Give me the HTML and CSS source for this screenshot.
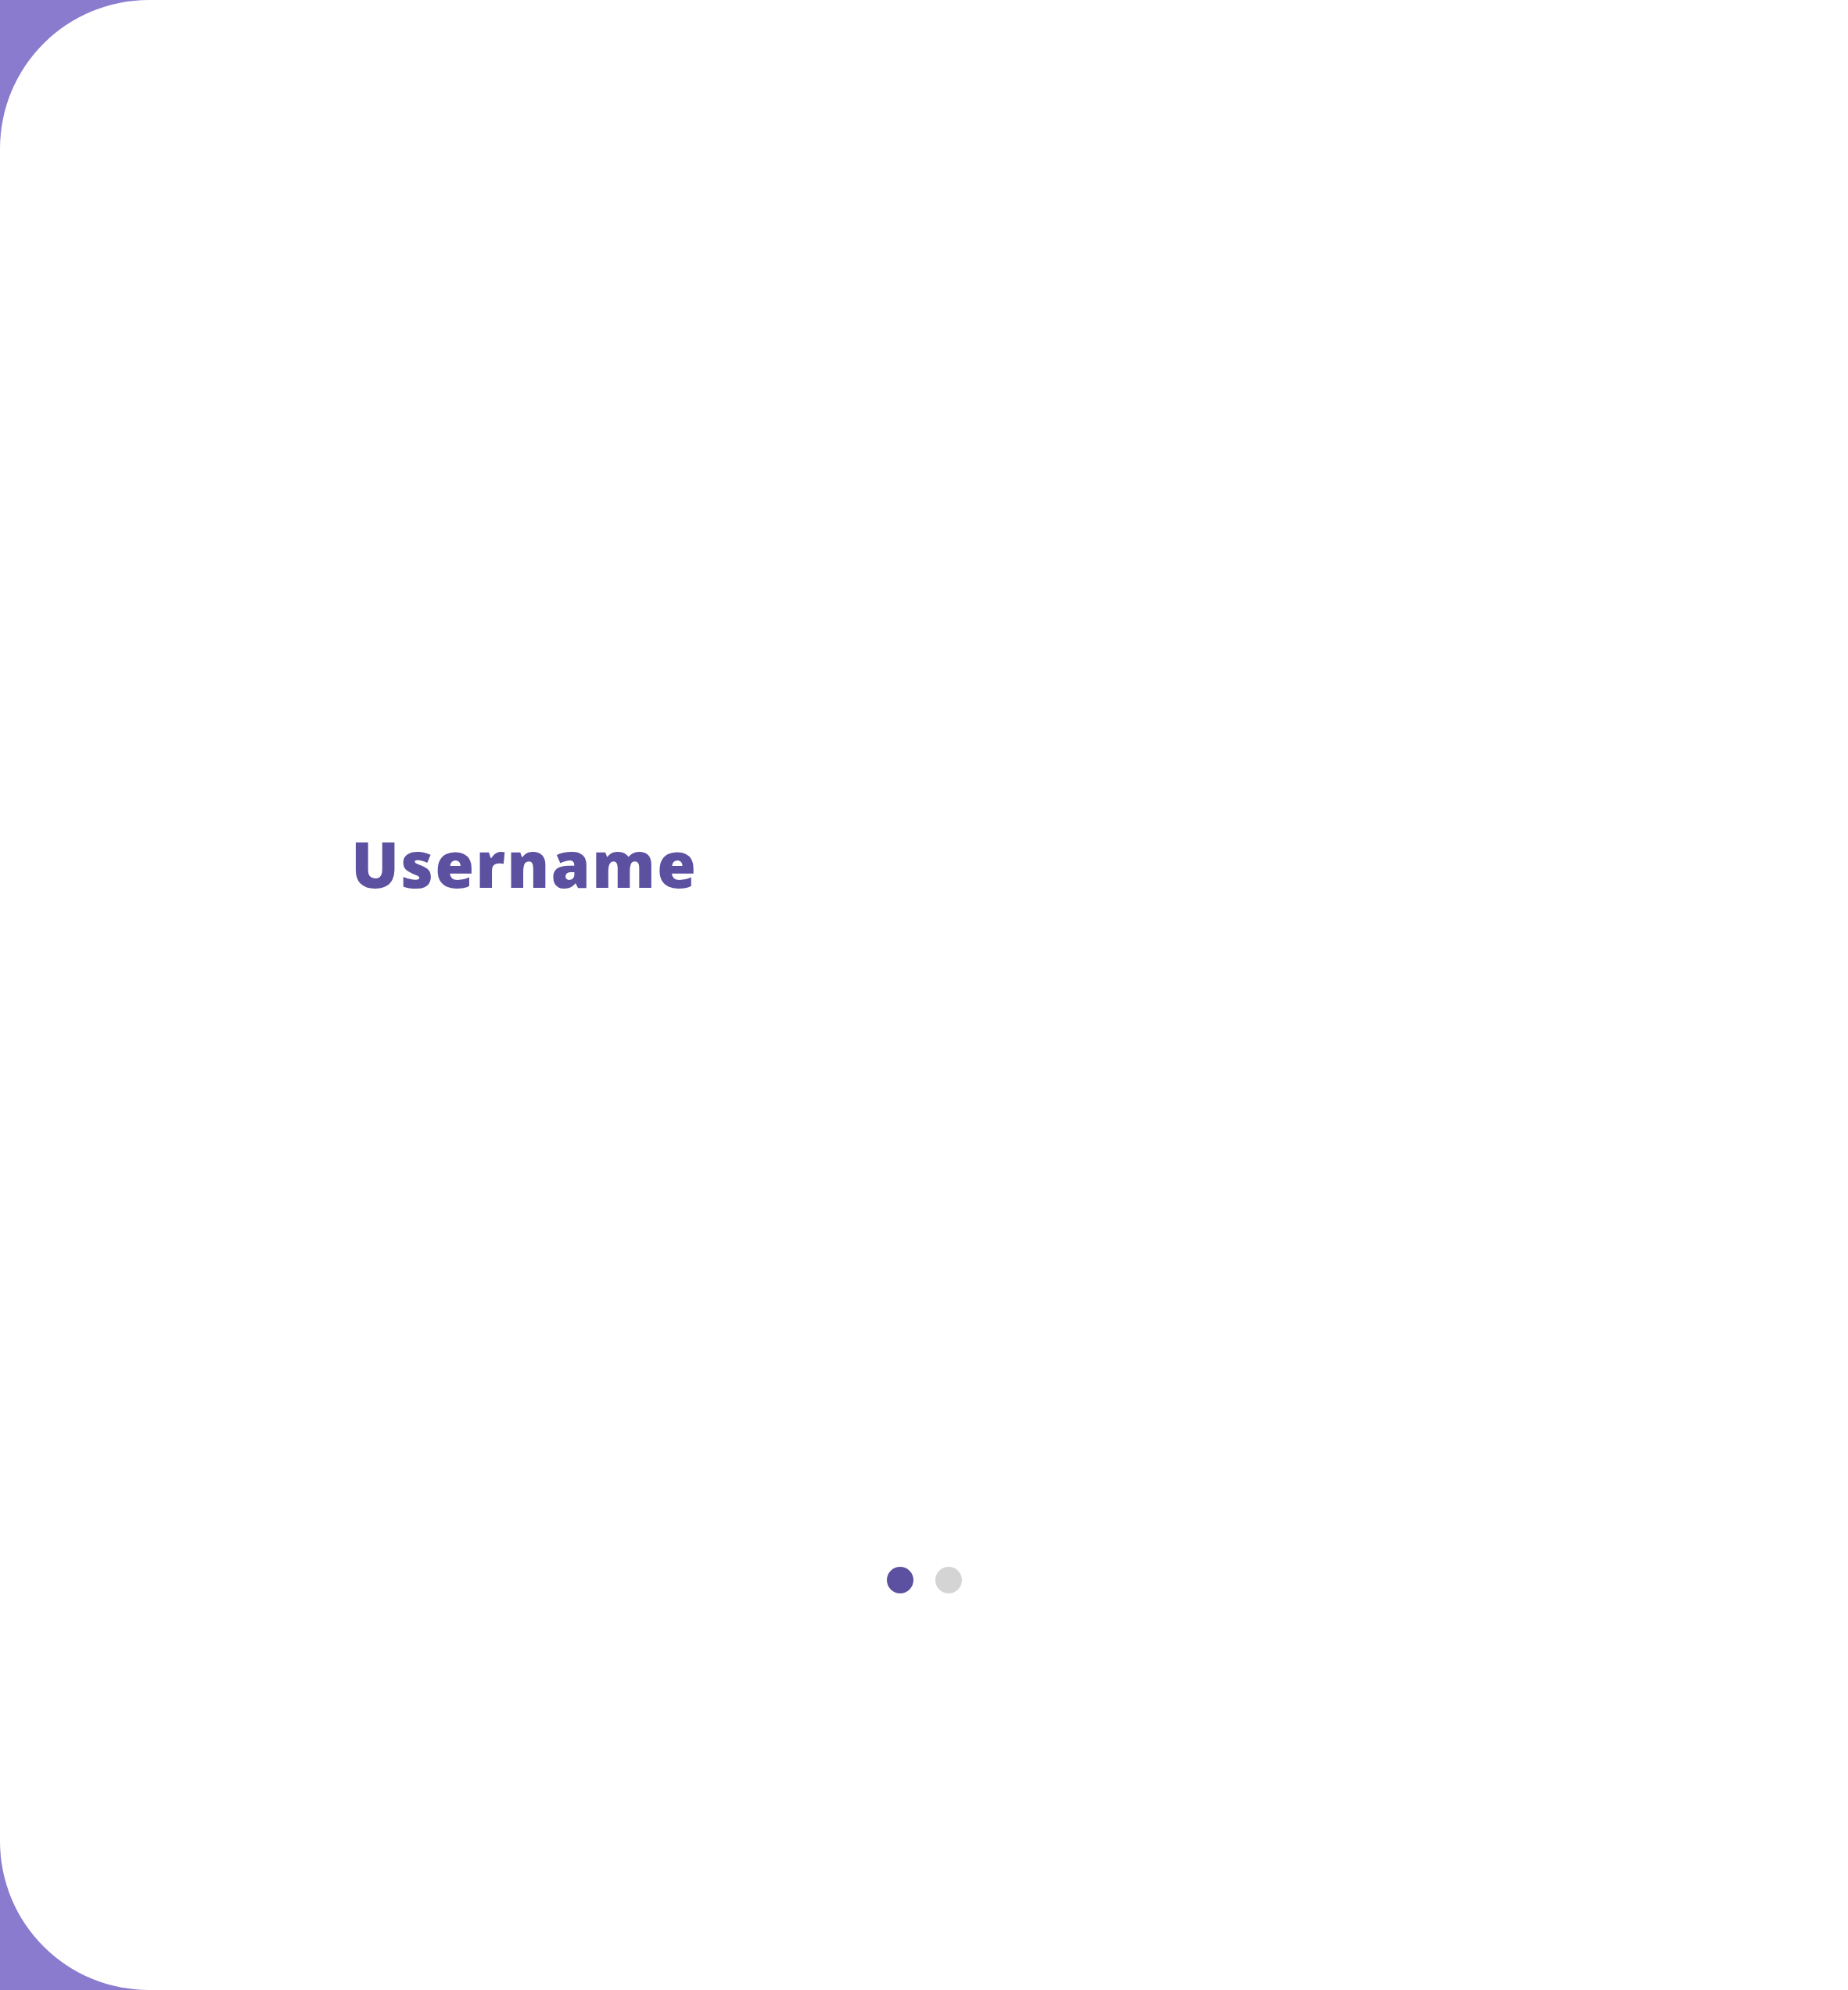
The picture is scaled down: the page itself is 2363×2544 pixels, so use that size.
FILE: index.html
```html
<!DOCTYPE html>
<html lang="en">
<head>
<meta charset="utf-8">
<title>Username</title>
<link rel="stylesheet" href="styles.css">
</head>
<body>
  <main class="card">
    <h1 class="title">Username</h1>
    <div class="dots">
      <span class="dot dot-active"></span>
      <span class="dot"></span>
    </div>
  </main>
</body>
</html>
```
FILE: styles.css
```css
html, body {
  margin: 0;
  padding: 0;
}
body {
  background: #8a7bcf;
  width: 2363px;
  height: 2544px;
  overflow: hidden;
}
.card {
  box-sizing: border-box;
  height: 2544px;
  background: #ffffff;
  border-radius: 190px 0 0 190px;
  display: flex;
  flex-direction: column;
}
.title {
  margin: 1063px 0 0 0;
  padding-left: 449px;
  font-family: "Open Sans", "Noto Sans", sans-serif;
  font-weight: 800;
  font-size: 81px;
  line-height: 1;
  color: #5c50a0;
  letter-spacing: 2px;
}
.dots {
  margin-top: 859px;
  display: flex;
  justify-content: center;
  gap: 28px;
}
.dot {
  width: 34px;
  height: 34px;
  border-radius: 50%;
  background: #d4d4d4;
}
.dot-active {
  background: #5c50a0;
}
```
